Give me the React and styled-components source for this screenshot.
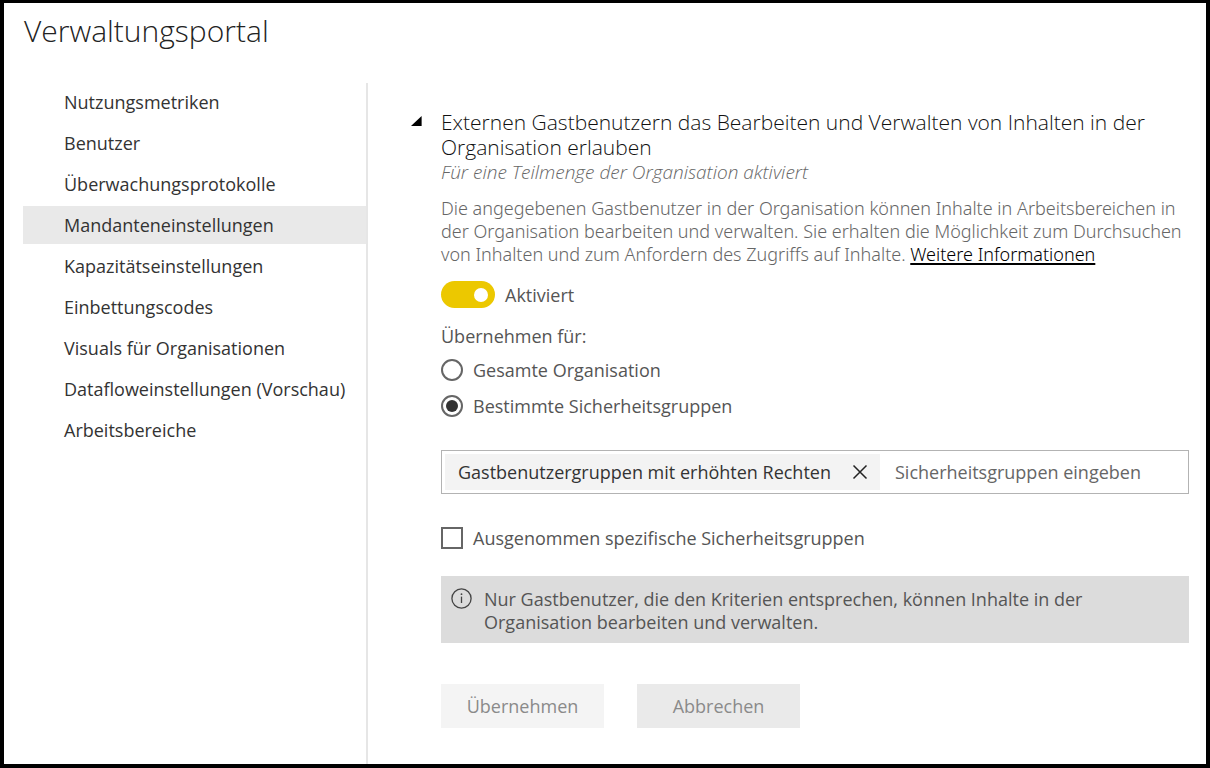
import React, { useState } from "react";
import styled, { createGlobalStyle } from "styled-components";

const GlobalStyle = createGlobalStyle`
  *, *::before, *::after { box-sizing: border-box; }
  body {
    margin: 0;
    background: #fff;
    color: #333;
    font-family: "Open Sans", "Noto Sans", sans-serif;
    font-size: 18px;
    line-height: 24px;
  }
  button, input { font: inherit; }
`;

const Page = styled.div`
  display: flex;
  flex-direction: column;
  min-height: 100vh;
  border: 4px solid #000;
  border-top-width: 3px;
`;

const Header = styled.header`
  padding: 8px 20px 32px;
`;

const PageTitle = styled.h1`
  margin: 0;
  color: #222;
  font-size: 30px;
  line-height: 40px;
  font-weight: 300;
`;

const Body = styled.div`
  display: flex;
  flex: 1;
`;

const Sidebar = styled.nav`
  flex: none;
  width: 364px;
  padding-left: 19px;
  border-right: 2px solid #e6e6e6;
`;

const NavList = styled.ul`
  display: flex;
  flex-direction: column;
  gap: 3px;
  margin: 0;
  padding: 0;
  list-style: none;
`;

const NavLink = styled.a`
  display: block;
  padding: 7px 0 7px 41px;
  color: #333;
  background: ${(p) => (p.$active ? "#e9e9e9" : "transparent")};
  text-decoration: none;
  white-space: nowrap;
`;

const Main = styled.main`
  flex: 1;
  min-width: 0;
  padding: 27px 17px 30px 43px;
`;

const Setting = styled.section`
  display: grid;
  grid-template-columns: 30px minmax(0, 1fr);
`;

const ExpandButton = styled.button`
  align-self: start;
  display: flex;
  width: 12px;
  padding: 6px 0;
  border: 0;
  background: none;
  cursor: pointer;
`;

const Content = styled.div`
  display: flex;
  flex-direction: column;
`;

const SettingTitle = styled.h2`
  margin: 0;
  color: #111;
  font-size: 21px;
  line-height: 25px;
  font-weight: 300;
`;

const Status = styled.p`
  margin: 0;
  color: #666;
  font-size: 19px;
  font-style: italic;
  font-weight: 300;
`;

const Description = styled.p`
  margin: 13px 0 0;
  color: #666;
  font-family: "Noto Sans", "Open Sans", sans-serif;
  font-weight: 300;
  line-height: 23px;
`;

const MoreLink = styled.a`
  color: #000;
  text-decoration: underline;
  text-decoration-thickness: 2px;
  text-underline-offset: 2px;
  text-decoration-skip-ink: none;
`;

const ToggleLabel = styled.label`
  display: flex;
  align-items: center;
  gap: 10px;
  margin-top: 15px;
  color: #555;
`;

const Switch = styled.input`
  appearance: none;
  display: flex;
  align-items: center;
  justify-content: ${(p) => (p.checked ? "flex-end" : "flex-start")};
  width: 54px;
  height: 27px;
  margin: 0;
  padding: 0 7px;
  border-radius: 14px;
  background: ${(p) => (p.checked ? "#ecc800" : "#a6a6a6")};

  &::before {
    content: "";
    width: 14px;
    height: 14px;
    border-radius: 50%;
    background: #fff;
  }
`;

const Scope = styled.fieldset`
  display: flex;
  flex-direction: column;
  gap: 12px;
  min-width: 0;
  margin: 16px 0 0;
  padding: 0;
  border: 0;
`;

const ScopeLegend = styled.legend`
  margin-bottom: 10px;
  padding: 0;
  color: #555;
`;

const OptionLabel = styled.label`
  display: flex;
  align-items: center;
  gap: 10px;
  color: #555;
`;

const Radio = styled.input`
  appearance: none;
  flex: none;
  display: grid;
  place-items: center;
  width: 22px;
  height: 22px;
  margin: 0;
  border: 2px solid #666;
  border-radius: 50%;

  &:checked::before {
    content: "";
    width: 12px;
    height: 12px;
    border-radius: 50%;
    background: #333;
  }
`;

const Checkbox = styled.input`
  appearance: none;
  flex: none;
  display: grid;
  place-items: center;
  width: 22px;
  height: 22px;
  margin: 0;
  border: 2px solid #666;

  &:checked::before {
    content: "";
    width: 12px;
    height: 12px;
    background: #333;
  }
`;

const GroupField = styled.div`
  display: flex;
  height: 44px;
  margin: 32px 0;
  padding: 3px;
  border: 1px solid #b3b3b3;
`;

const Chip = styled.span`
  flex: none;
  display: flex;
  align-items: center;
  gap: 21px;
  padding: 0 12px 0 13px;
  background: #f3f3f3;
`;

const ChipRemove = styled.button`
  display: flex;
  padding: 0;
  border: 0;
  background: none;
  cursor: pointer;
`;

const GroupInput = styled.input`
  flex: 1;
  min-width: 0;
  padding: 0 15px;
  border: 0;
  outline: 0;
  background: none;

  &::placeholder { color: #666; opacity: 1; }
`;

const Notice = styled.div`
  display: flex;
  gap: 12px;
  margin-top: 26px;
  padding: 12px 10px 9px;
  background: #dcdcdc;
  color: #555;
`;

const NoticeText = styled.p`
  max-width: 620px;
  margin: 0;
  line-height: 23px;
`;

const Actions = styled.div`
  display: flex;
  gap: 33px;
  margin-top: 41px;
`;

const ActionButton = styled.button`
  width: 163px;
  height: 44px;
  padding: 0;
  border: 0;
  background: ${(p) => (p.$primary ? "#f4f4f4" : "#eaeaea")};
  color: #8a8a8a;
`;

const InfoIcon = styled.svg`
  flex: none;
`;

const navItems = [
  "Nutzungsmetriken",
  "Benutzer",
  "Überwachungsprotokolle",
  "Mandanteneinstellungen",
  "Kapazitätseinstellungen",
  "Einbettungscodes",
  "Visuals für Organisationen",
  "Datafloweinstellungen (Vorschau)",
  "Arbeitsbereiche",
];

export default function App() {
  const [enabled, setEnabled] = useState(true);
  const [scope, setScope] = useState("groups");

  return (
    <>
      <GlobalStyle />
      <Page>
        <Header>
          <PageTitle>Verwaltungsportal</PageTitle>
        </Header>
        <Body>
          <Sidebar>
            <NavList>
              {navItems.map((item) => (
                <li key={item}>
                  <NavLink href="#" $active={item === "Mandanteneinstellungen"}>
                    {item}
                  </NavLink>
                </li>
              ))}
            </NavList>
          </Sidebar>
          <Main>
            <Setting>
              <ExpandButton type="button" aria-expanded="true" aria-label="Einstellung einklappen">
                <svg width="11" height="10" viewBox="0 0 11 10">
                  <path d="M10.6 0V10H0Z" fill="#000" />
                </svg>
              </ExpandButton>
              <Content>
                <SettingTitle>
                  Externen Gastbenutzern das Bearbeiten und Verwalten von Inhalten in der Organisation erlauben
                </SettingTitle>
                <Status>Für eine Teilmenge der Organisation aktiviert</Status>
                <Description>
                  Die angegebenen Gastbenutzer in der Organisation können Inhalte in Arbeitsbereichen in
                  der Organisation bearbeiten und verwalten. Sie erhalten die Möglichkeit zum Durchsuchen
                  von Inhalten und zum Anfordern des Zugriffs auf Inhalte.{" "}
                  <MoreLink href="#">Weitere Informationen</MoreLink>
                </Description>
                <ToggleLabel>
                  <Switch
                    type="checkbox"
                    role="switch"
                    checked={enabled}
                    onChange={(e) => setEnabled(e.target.checked)}
                  />
                  Aktiviert
                </ToggleLabel>
                <Scope>
                  <ScopeLegend>Übernehmen für:</ScopeLegend>
                  <OptionLabel>
                    <Radio
                      type="radio"
                      name="scope"
                      checked={scope === "all"}
                      onChange={() => setScope("all")}
                    />
                    Gesamte Organisation
                  </OptionLabel>
                  <OptionLabel>
                    <Radio
                      type="radio"
                      name="scope"
                      checked={scope === "groups"}
                      onChange={() => setScope("groups")}
                    />
                    Bestimmte Sicherheitsgruppen
                  </OptionLabel>
                </Scope>
                <GroupField>
                  <Chip>
                    Gastbenutzergruppen mit erhöhten Rechten
                    <ChipRemove type="button" aria-label="Entfernen">
                      <svg width="16" height="16" viewBox="0 0 16 16">
                        <path d="M1.5 1.5L14.5 14.5M14.5 1.5L1.5 14.5" stroke="#222" strokeWidth="1.5" />
                      </svg>
                    </ChipRemove>
                  </Chip>
                  <GroupInput
                    type="text"
                    placeholder="Sicherheitsgruppen eingeben"
                    aria-label="Sicherheitsgruppen"
                  />
                </GroupField>
                <OptionLabel>
                  <Checkbox type="checkbox" />
                  Ausgenommen spezifische Sicherheitsgruppen
                </OptionLabel>
                <Notice>
                  <InfoIcon width="21" height="21" viewBox="0 0 21 21" fill="none">
                    <circle cx="10.5" cy="10.5" r="9.6" stroke="#444" strokeWidth="1.3" />
                    <path d="M10.5 8.6V15" stroke="#444" strokeWidth="1.3" />
                    <circle cx="10.5" cy="6.2" r="0.9" fill="#444" />
                  </InfoIcon>
                  <NoticeText>
                    Nur Gastbenutzer, die den Kriterien entsprechen, können Inhalte in der
                    Organisation bearbeiten und verwalten.
                  </NoticeText>
                </Notice>
                <Actions>
                  <ActionButton type="button" $primary>Übernehmen</ActionButton>
                  <ActionButton type="button">Abbrechen</ActionButton>
                </Actions>
              </Content>
            </Setting>
          </Main>
        </Body>
      </Page>
    </>
  );
}
